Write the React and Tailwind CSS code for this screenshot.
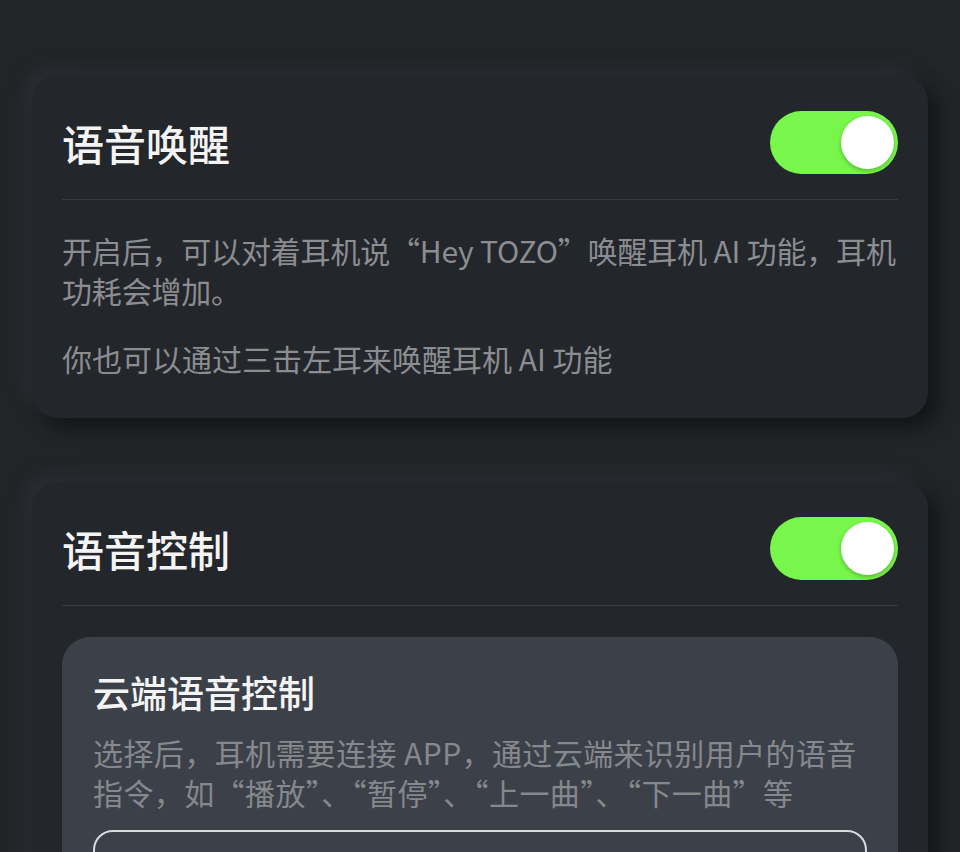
import React, { useState } from "react";

const font = { fontFamily: '"Noto Sans CJK SC", "Noto Sans", sans-serif' };

const Toggle = ({ on, onClick }) => (
  <button
    onClick={onClick}
    className={`relative h-[63px] w-[128px] shrink-0 rounded-full ${
      on ? "bg-[#78f64b]" : "bg-[#4a4d53]"
    }`}
  >
    <span
      className={`absolute top-[5px] h-[53px] w-[53px] rounded-full bg-white shadow-[0_2px_4px_rgba(0,0,0,0.25)] ${
        on ? "right-[4px]" : "left-[4px]"
      }`}
    />
  </button>
);

const Card = ({ title, on, onToggle, children }) => (
  <section className="rounded-[26px] bg-[#23262a] px-[30px] shadow-[10px_10px_18px_#141518,-8px_-8px_16px_#2c2e33]">
    <div className="flex items-center justify-between border-b border-[#383b40] pt-[35px] pb-[25px]">
      <h2 className="text-[42px] leading-[50px] font-medium text-[#f4f4f4]">
        {title}
      </h2>
      <Toggle on={on} onClick={onToggle} />
    </div>
    {children}
  </section>
);

export default function App() {
  const [wake, setWake] = useState(true);
  const [control, setControl] = useState(true);

  return (
    <div
      style={font}
      className="h-[852px] overflow-hidden bg-[#222428] px-[32px] pt-[76px]"
    >
      <Card title="语音唤醒" on={wake} onToggle={() => setWake(!wake)}>
        <div className="pt-[30px] pb-[40px] text-[30px] leading-[40px] text-[#8b8d91] whitespace-nowrap">
          <p className="tracking-[-0.18px]">
            开启后，可以对着耳机说“Hey TOZO”唤醒耳机 AI 功能，耳机
            <br />
            功耗会增加。
          </p>
          <p className="mt-[28px]">你也可以通过三击左耳来唤醒耳机 AI 功能</p>
        </div>
      </Card>

      <div className="mt-[64px]">
        <Card title="语音控制" on={control} onToggle={() => setControl(!control)}>
          <div className="pt-[31px]">
            <div className="rounded-[28px] bg-[#3c4048] px-[31px] pt-[33px] pb-[30px]">
              <h3 className="text-[37px] leading-[44px] font-medium text-[#f4f4f4]">
                云端语音控制
              </h3>
              <p className="mt-[18px] text-[30px] leading-[40px] tracking-[0.4px] text-[#85888d] whitespace-nowrap">
                选择后，耳机需要连接 APP，通过云端来识别用户的语音
                <br />
                指令，如“播放”、“暂停”、“上一曲”、“下一曲”等
              </p>
              <div className="mt-[18px] h-[90px] rounded-[20px] border-2 border-[#d8d9db]" />
            </div>
          </div>
        </Card>
      </div>
    </div>
  );
}
